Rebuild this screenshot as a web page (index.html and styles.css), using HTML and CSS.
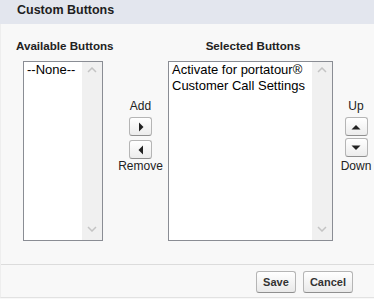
FILE: index.html
```html
<!DOCTYPE html>
<html>
<head>
<meta charset="utf-8">
<link rel="stylesheet" href="styles.css">
</head>
<body>
<div class="panel">
  <div class="pb-header"><h3 class="pb-title">Custom Buttons</h3></div>
  <div class="pb-body">
    <div class="dueling">
      <div class="col col-avail">
        <div class="col-label">Available Buttons</div>
        <div class="listbox lb-avail">
          <div class="lb-items"><div class="lb-option">--None--</div></div>
          <div class="lb-track">
            <svg class="chev" width="10" height="6" viewBox="0 0 10 6"><path d="M1 5 L5 1 L9 5" fill="none" stroke="#c4c4c4" stroke-width="1.5"/></svg>
            <svg class="chev" width="10" height="6" viewBox="0 0 10 6"><path d="M1 1 L5 5 L9 1" fill="none" stroke="#c4c4c4" stroke-width="1.5"/></svg>
          </div>
        </div>
      </div>
      <div class="col col-move">
        <div class="move-label label-top">Add</div>
        <button class="arrow-btn btn-first"><svg width="6" height="10" viewBox="0 0 6 10"><path d="M1 0.5 L5.5 5 L1 9.5 Z" fill="#222"/></svg></button>
        <button class="arrow-btn btn-second"><svg width="6" height="10" viewBox="0 0 6 10"><path d="M5 0.5 L0.5 5 L5 9.5 Z" fill="#222"/></svg></button>
        <div class="move-label">Remove</div>
      </div>
      <div class="col col-sel">
        <div class="col-label col-label-center">Selected Buttons</div>
        <div class="listbox lb-sel">
          <div class="lb-items">
            <div class="lb-option">Activate for portatour®</div>
            <div class="lb-option">Customer Call Settings</div>
          </div>
          <div class="lb-track">
            <svg class="chev" width="10" height="6" viewBox="0 0 10 6"><path d="M1 5 L5 1 L9 5" fill="none" stroke="#c4c4c4" stroke-width="1.5"/></svg>
            <svg class="chev" width="10" height="6" viewBox="0 0 10 6"><path d="M1 1 L5 5 L9 1" fill="none" stroke="#c4c4c4" stroke-width="1.5"/></svg>
          </div>
        </div>
      </div>
      <div class="col col-order">
        <div class="move-label label-top">Up</div>
        <button class="arrow-btn btn-first"><svg width="10" height="6" viewBox="0 0 10 6"><path d="M0.5 5.5 L5 1 L9.5 5.5 Z" fill="#222"/></svg></button>
        <button class="arrow-btn btn-tight"><svg width="10" height="6" viewBox="0 0 10 6"><path d="M0.5 0.5 L5 5 L9.5 0.5 Z" fill="#222"/></svg></button>
        <div class="move-label label-down">Down</div>
      </div>
    </div>
  </div>
  <div class="pb-footer">
    <button class="btn btn-save">Save</button>
    <button class="btn">Cancel</button>
  </div>
</div>
</body>
</html>
```

FILE: styles.css
```css
html, body {
  margin: 0;
  padding: 0;
  background: #f8f8f8;
}

body {
  font-family: "Liberation Sans", Arial, sans-serif;
  color: #222;
  overflow: hidden;
}

.panel {
  width: 374px;
  background: #f8f8f8;
  border-left: 1px solid #eeeeee;
  border-bottom: 1px solid #e2e2e2;
  box-sizing: border-box;
}

.pb-header {
  height: 24px;
  background: #e3e6ee;
  padding-left: 16px;
  margin-left: -1px;
  padding-left: 17px;
}

.pb-title {
  margin: 0;
  font-size: 12.5px;
  font-weight: bold;
  line-height: 21px;
  color: #1e1e1e;
}

.pb-body {
  padding: 15px 0 23px 15px;
}

.dueling {
  display: flex;
  align-items: flex-start;
}

.col {
  display: flex;
  flex-direction: column;
}

.col-avail {
  width: 97px;
}

.col-label {
  font-size: 11.6px;
  font-weight: bold;
  line-height: 14px;
  height: 14px;
  white-space: nowrap;
  color: #222;
  margin-bottom: 8px;
}

.col-label-center {
  text-align: center;
  padding-left: 5px;
}

.listbox {
  display: flex;
  height: 180px;
  box-sizing: border-box;
  border: 1px solid #8a8d94;
  background: #fff;
}

.lb-avail {
  width: 80px;
  margin-left: 7px;
}

.col-sel {
  width: 165px;
}

.lb-sel {
  width: 165px;
}

.lb-items {
  flex: 1;
  padding-left: 3px;
  font-size: 13px;
  line-height: 16px;
  color: #000;
  white-space: nowrap;
  overflow: hidden;
}

.lb-track {
  width: 20px;
  background: #f0f0f0;
  display: flex;
  flex-direction: column;
  justify-content: space-between;
  align-items: center;
  padding: 5px 0 8px;
}

.chev {
  display: block;
}

.col-move {
  width: 55px;
  align-items: center;
}

.col-order {
  width: 32px;
  margin-left: 7px;
  align-items: center;
}

.move-label {
  font-size: 12px;
  line-height: 14px;
  color: #222;
  white-space: nowrap;
}

.label-top {
  margin-top: 60px;
}

.arrow-btn {
  width: 23px;
  height: 19px;
  padding: 0;
  margin: 0;
  box-sizing: border-box;
  border: 1px solid #b5b5b5;
  border-bottom-color: #8f8f8f;
  border-radius: 3px;
  background: linear-gradient(#ffffff, #ececec);
  display: flex;
  align-items: center;
  justify-content: center;
}

.arrow-btn svg {
  display: block;
}

.btn-first {
  margin-top: 4px;
}

.btn-second {
  margin-top: 4px;
}

.btn-tight {
  margin-top: 2px;
}

.label-down {
  margin-top: 2px;
}

.pb-footer {
  border-top: 1px solid #dcdcdc;
  display: flex;
  justify-content: flex-end;
  gap: 7px;
  padding: 6px 21px 4px 0;
}

.btn {
  height: 22px;
  box-sizing: border-box;
  margin: 0;
  padding: 0 6px;
  font-family: "Liberation Sans", Arial, sans-serif;
  font-size: 11px;
  font-weight: bold;
  color: #333;
  border: 1px solid #b5b5b5;
  border-bottom-color: #8f8f8f;
  border-radius: 3px;
  background: linear-gradient(#ffffff, #e9e9e9);
}

.btn-save {
  width: 40px;
}
```
